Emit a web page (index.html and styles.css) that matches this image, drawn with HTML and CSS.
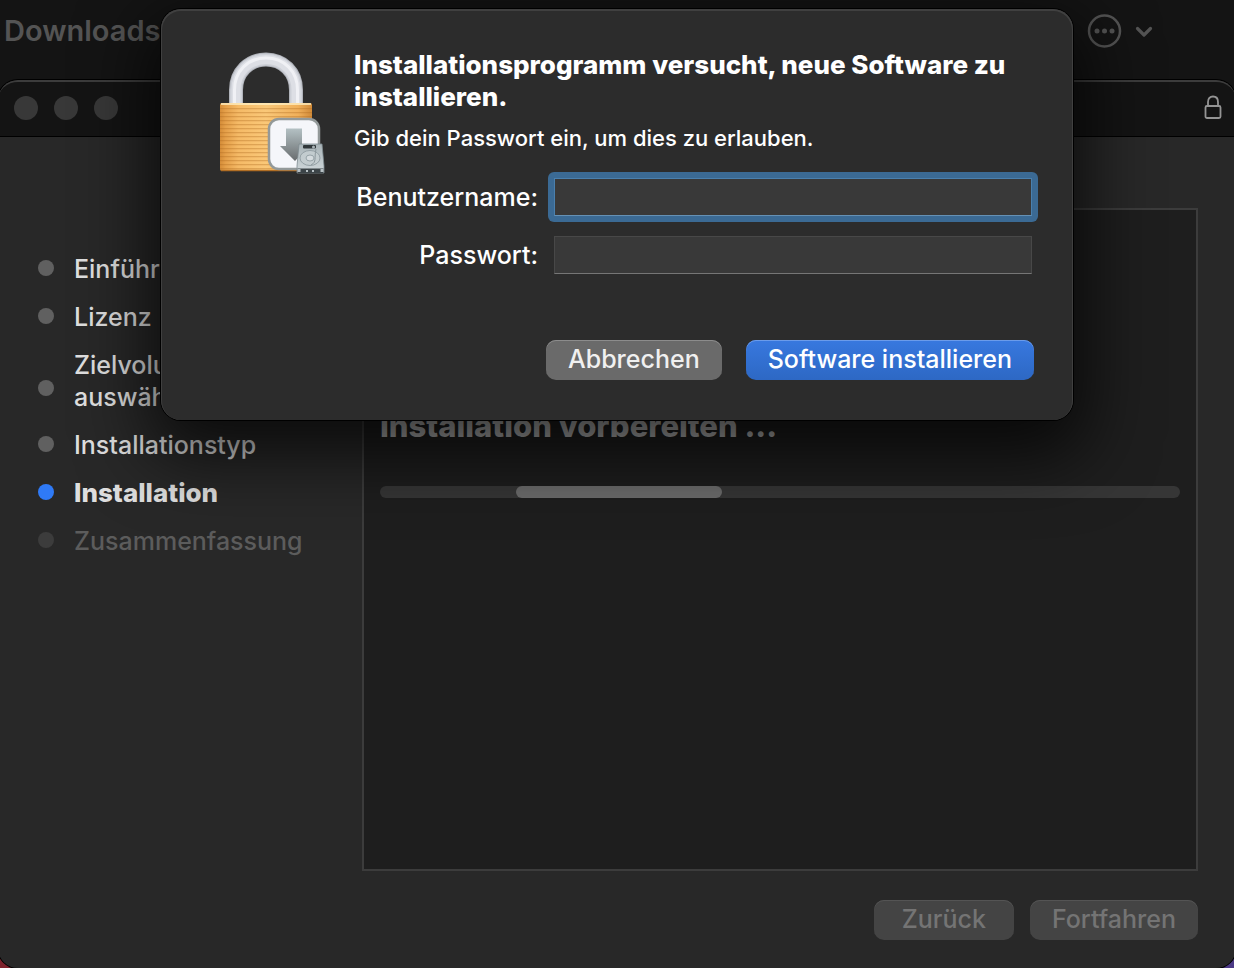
FILE: index.html
```html
<!DOCTYPE html>
<html lang="de">
<head>
<meta charset="utf-8">
<meta name="viewport" content="width=device-width, initial-scale=1">
<title>Installation</title>
<link rel="stylesheet" href="styles.css">
</head>
<body>
<header class="finder">
  <span class="finder-title">Downloads</span>
  <button class="finder-more" type="button" aria-label="Mehr">
    <svg width="66" height="36" viewBox="0 0 66 36" fill="none" stroke="#545454" stroke-linecap="round" stroke-linejoin="round">
      <circle cx="17.500" cy="18" r="15.500" stroke-width="2.500"/>
      <g fill="#545454" stroke="none"><circle cx="10" cy="18" r="2.500"/><circle cx="17.500" cy="18" r="2.500"/><circle cx="25" cy="18" r="2.500"/></g>
      <path d="M50.500 15.500l6.500 6.500 6.500-6.500" stroke-width="3.200"/>
    </svg>
  </button>
</header>

<main class="window">
  <div class="titlebar">
    <span class="light"></span><span class="light"></span><span class="light"></span>
    <svg class="titlebar-lock" width="18" height="26" viewBox="0 0 18 26" fill="none" stroke="#949494" stroke-width="1.800">
      <rect x="1.500" y="11" width="15" height="12" rx="1.500"/>
      <path d="M4 11V7C4 3.500 6 1.500 9 1.500S14 3.500 14 7v4"/>
    </svg>
  </div>
  <div class="content">
    <ol class="steps">
      <li class="step"><span class="dot"></span>Einführung</li>
      <li class="step"><span class="dot"></span>Lizenz</li>
      <li class="step step-tall"><span class="dot"></span>Zielvolume auswählen</li>
      <li class="step"><span class="dot"></span>Installationstyp</li>
      <li class="step step-current"><span class="dot"></span>Installation</li>
      <li class="step step-pending"><span class="dot"></span>Zusammenfassung</li>
    </ol>
    <section class="pane">
      <div class="panel">
        <h1 class="panel-title">Installation vorbereiten ...</h1>
        <div class="progress" role="progressbar" aria-label="Installation vorbereiten"><div class="progress-bar"></div></div>
      </div>
      <div class="pane-actions">
        <button class="button button-back" type="button" disabled>Zurück</button>
        <button class="button" type="button" disabled>Fortfahren</button>
      </div>
    </section>
  </div>
</main>

<form class="dialog" role="dialog" aria-labelledby="dialog-title">
  <svg class="dialog-icon" width="108" height="126" viewBox="0 0 108 126">
    <defs>
      <linearGradient id="gold" x2="1"><stop offset="0" stop-color="#d58d38"/><stop offset=".06" stop-color="#e5a04a"/><stop offset=".2" stop-color="#f5ba66"/><stop offset=".5" stop-color="#fac878"/><stop offset=".85" stop-color="#f0b05a"/><stop offset="1" stop-color="#d08a38"/></linearGradient>
      <linearGradient id="arrow" x2="0" y2="1"><stop offset="0" stop-color="#b4c1c4"/><stop offset="1" stop-color="#686c6e"/></linearGradient>
      <linearGradient id="disk" x2="0" y2="1"><stop offset="0" stop-color="#a9b4b8"/><stop offset="1" stop-color="#d0d8db"/></linearGradient>
      <pattern id="ridges" width="4" height="4" patternUnits="userSpaceOnUse"><rect width="4" height="1.300" fill="#ac681c" opacity=".35"/></pattern>
    </defs>
    <g fill="none">
      <path d="M16 53V38C16 20 29 7.500 46 7.500S76 20 76 38v15" stroke="#b0b3ba" stroke-width="14"/>
      <path d="M16 53V38C16 20 29 7.500 46 7.500S76 20 76 38v15" stroke="#cdd0d7" stroke-width="12"/>
      <path d="M16 53V38C16 20 29 7.500 46 7.500S76 20 76 38v15" stroke="#dddfe5" stroke-width="9"/>
      <path d="M14.500 53V38C14.500 19 28 6 46 6s31.500 13 31.500 32v15" stroke="#f0f1f5" stroke-width="3"/>
    </g>
    <rect y="51" width="92" height="68" rx="2" fill="url(#gold)"/>
    <rect y="54" width="92" height="63" fill="url(#ridges)"/>
    <path d="M1 52h90" stroke="#fff0c4" stroke-width="1.500"/>
    <path d="M1 118.500h90" stroke="#b16e24" stroke-width="1.500"/>
    <rect x="49" y="67" width="50" height="50" rx="10" fill="#f5f6fa" stroke="#939999" stroke-width="2.500"/>
    <path d="M66 76.500h16V94h7L75 109 60 94h6z" fill="url(#arrow)"/>
    <path d="M79 92h23l2 22v7H77v-7z" fill="url(#disk)" stroke="#7e8a8f" stroke-width=".8"/>
    <path d="M77.500 116.500h26v4.500h-26z" fill="#3c4448"/>
    <path d="M77.500 117h3v3h-3zM100.500 117h3v3h-3zM86 118h2v2h-2zM92 118h2v2h-2z" fill="#b7c0c4"/>
    <ellipse cx="90" cy="106" rx="10" ry="7.500" fill="#c3cccf" stroke="#94a0a5"/>
    <ellipse cx="90" cy="106" rx="4" ry="3" fill="#d6dcdf" stroke="#97a3a8"/>
    <path d="M96 97c-2 9 1 13-5 16" fill="none" stroke="#8d989d"/>
    <rect x="83" y="93" width="13" height="3.500" rx="1" fill="#30373a"/><circle cx="93.500" cy="95" r="1.500" fill="#aab4b8"/>
  </svg>
  <div class="dialog-body">
    <h2 class="dialog-title" id="dialog-title">Installationsprogramm versucht, neue Software zu installieren.</h2>
    <p class="dialog-text">Gib dein Passwort ein, um dies zu erlauben.</p>
    <div class="fields">
      <label class="label" for="user">Benutzername:</label>
      <span class="field field-active"><input class="input" id="user" type="text" autocomplete="off"></span>
      <label class="label" for="password">Passwort:</label>
      <span class="field"><input class="input" id="password" type="password" autocomplete="off"></span>
    </div>
    <div class="dialog-actions">
      <button class="button button-cancel" type="button">Abbrechen</button>
      <button class="button button-primary" type="submit">Software installieren</button>
    </div>
  </div>
</form>
</body>
</html>
```

FILE: styles.css
```css
* {
  box-sizing: border-box;
}

body {
  position: relative;
  display: flex;
  flex-direction: column;
  min-height: 100vh;
  margin: 0;
  overflow-x: hidden;
  background: linear-gradient(90deg, #7d222c, #4c3a86);
  color: #dfdfdf;
  font: 500 25px/32px Inter, "Liberation Sans", sans-serif;
}

/* Finder toolbar behind the installer */
.finder {
  display: flex;
  justify-content: space-between;
  align-items: flex-start;
  height: 104px;
  padding: 13px 81px 0 4px;
  background: #141414;
}

.finder-title {
  padding-top: 2px;
  color: #545454;
  font-size: 29px;
  font-weight: 600;
}

.finder-more {
  display: flex;
  padding: 0;
  border: 0;
  background: none;
}

/* Installer window, its sides just past the screen edges */
.window {
  display: flex;
  flex: 1;
  flex-direction: column;
  margin: -24px -2px 0;
  border-radius: 20px;
  background: #282828;
  box-shadow: 0 0 0 1px #000;
  overflow: hidden;
}

.titlebar {
  display: flex;
  align-items: center;
  gap: 16px;
  height: 57px;
  padding: 0 14px 2px 16px;
  border-top: 2px solid #3c3c3c;
  border-bottom: 1px solid #000;
  border-radius: 20px 20px 0 0;
  background: #141414;
}

.light {
  width: 24px;
  height: 24px;
  border-radius: 50%;
  background: #383838;
}

.titlebar-lock {
  margin-left: auto;
}

.content {
  display: flex;
  flex: 1;
  padding: 71px 38px 28px 40px;
}

.steps {
  display: flex;
  flex: 0 0 324px;
  flex-direction: column;
  gap: 16px;
  margin: 0;
  padding: 45px 40px 0 0;
  list-style: none;
}

.step {
  display: flex;
  align-items: center;
  gap: 20px;
}

.step-tall {
  padding-right: 80px;
}

.dot {
  flex: none;
  width: 16px;
  height: 16px;
  margin-bottom: 2px;
  border-radius: 50%;
  background: #606060;
}

.step-tall .dot {
  margin-top: 16px;
}

.step-current {
  font-size: 26px;
  font-weight: 800;
}

.step-current .dot {
  background: #2f7af6;
}

.step-pending {
  color: #5c5c5c;
}

.step-pending .dot {
  background: #3c3c3c;
}

.pane {
  display: flex;
  flex: 1;
  flex-direction: column;
  gap: 29px;
}

.panel {
  flex: 1;
  padding: 200px 16px 0;
  border: 2px solid #3c3c3c;
  background: #1e1e1e;
}

.panel-title {
  margin: 0 0 44px;
  color: #b8b8b8;
  font-size: 31px;
  font-weight: 800;
  line-height: 32px;
}

.progress {
  height: 12px;
  padding-left: 17%;
  border-radius: 6px;
  background: #363636;
}

.progress-bar {
  width: 31%;
  height: 12px;
  border-radius: 6px;
  background: #6c6c6c;
}

.pane-actions {
  display: flex;
  justify-content: flex-end;
  gap: 16px;
}

.button {
  height: 40px;
  padding: 0 22px 2px;
  border: 0;
  border-radius: 10px;
  background: #444;
  box-shadow: inset 0 1px 0 #545454;
  color: #747474;
  font: inherit;
  white-space: nowrap;
}

.button-back {
  padding: 0 28px 2px;
}

/* Password dialog */
.dialog {
  position: absolute;
  top: 9px;
  right: 0;
  left: 0;
  display: flex;
  gap: 26px;
  width: 100%;
  max-width: 912px;
  margin: 0 auto;
  padding: 40px 35px 40px 59px;
  border-radius: 20px;
  background: #2c2c2c;
  box-shadow: 0 0 0 1px #000, inset 0 1px 0 1px #404040, 0 24px 70px 12px rgba(0, 0, 0, .72);
  color: #fff;
}

.dialog-icon {
  flex: none;
  margin-top: 3px;
}

.dialog-body {
  flex: 1;
}

.dialog-title {
  margin: 0;
  font-size: 26px;
  font-weight: 800;
  line-height: 32px;
}

.dialog-text {
  margin: 9px 0 18px;
  font-size: 22px;
  line-height: 32px;
}

.fields {
  display: grid;
  grid-template-columns: 184px 1fr;
  gap: 8px 10px;
  align-items: center;
}

.label {
  text-align: right;
  white-space: nowrap;
}

.field {
  display: flex;
  padding: 6px;
  border-radius: 6px;
}

.field-active {
  background: #3b6a94;
}

.input {
  width: 100%;
  height: 38px;
  padding: 0 8px;
  border: 1px solid #484848;
  border-bottom-color: #767676;
  border-radius: 0;
  outline: 0;
  background: #393939;
  color: #fff;
  font: inherit;
}

.field-active .input {
  border-color: #4a80ae;
  border-bottom-color: #6591b5;
}

.dialog-actions {
  display: flex;
  justify-content: flex-end;
  gap: 24px;
  margin-top: 60px;
  padding-right: 4px;
}

.button-cancel {
  background: #6a6a6a;
  box-shadow: inset 0 1px 0 #8c8c8c;
  color: #f0f0f0;
}

.button-primary {
  background: linear-gradient(#3878df, #2d68c4);
  box-shadow: inset 0 1px 0 #6b9bea;
  color: #fff;
}
```
